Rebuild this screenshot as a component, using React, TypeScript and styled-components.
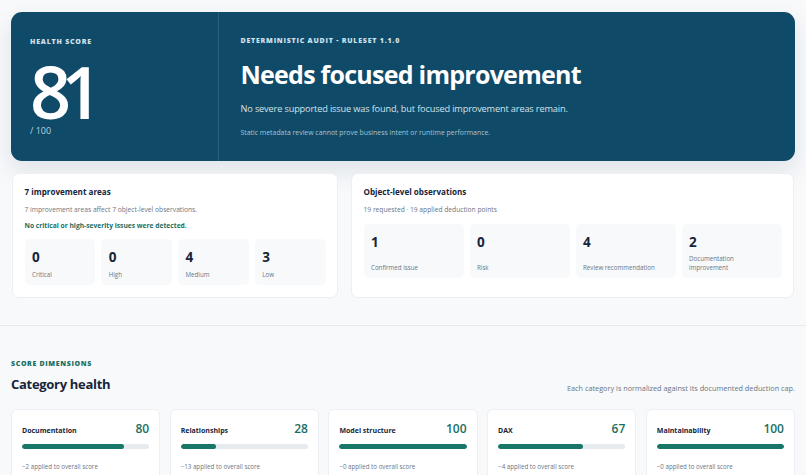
import React from 'react';
import styled, { createGlobalStyle } from 'styled-components';

const severity = [
  { value: 0, label: 'Critical' },
  { value: 0, label: 'High' },
  { value: 4, label: 'Medium' },
  { value: 3, label: 'Low' },
];

const observations = [
  { value: 1, label: 'Confirmed issue' },
  { value: 0, label: 'Risk' },
  { value: 4, label: 'Review recommendation' },
  { value: 2, label: 'Documentation improvement' },
];

const categories = [
  { name: 'Documentation', score: 80, applied: 2 },
  { name: 'Relationships', score: 28, applied: 13 },
  { name: 'Model structure', score: 100, applied: 0 },
  { name: 'DAX', score: 67, applied: 4 },
  { name: 'Maintainability', score: 100, applied: 0 },
];

const App = () => (
  <>
    <GlobalStyle />
    <Page>
      <Hero>
        <ScoreColumn>
          <Eyebrow>HEALTH SCORE</Eyebrow>
          <BigScore>81</BigScore>
          <ScoreMax>/ 100</ScoreMax>
        </ScoreColumn>
        <VerdictColumn>
          <Eyebrow>DETERMINISTIC AUDIT - RULESET 1.1.0</Eyebrow>
          <Verdict>Needs focused improvement</Verdict>
          <VerdictText>No severe supported issue was found, but focused improvement areas remain.</VerdictText>
          <VerdictNote>Static metadata review cannot prove business intent or runtime performance.</VerdictNote>
        </VerdictColumn>
      </Hero>

      <SummaryGrid>
        <SummaryCard>
          <CardTitle>7 improvement areas</CardTitle>
          <CardText>7 improvement areas affect 7 object-level observations.</CardText>
          <GoodText>No critical or high-severity issues were detected.</GoodText>
          <StatRow>
            {severity.map((item) => (
              <StatBox key={item.label}>
                <StatValue>{item.value}</StatValue>
                <StatLabel>{item.label}</StatLabel>
              </StatBox>
            ))}
          </StatRow>
        </SummaryCard>
        <SummaryCard>
          <CardTitle>Object-level observations</CardTitle>
          <CardText>19 requested · 19 applied deduction points</CardText>
          <StatRow $tall>
            {observations.map((item) => (
              <StatBox key={item.label} $tall>
                <StatValue>{item.value}</StatValue>
                <StatLabel>{item.label}</StatLabel>
              </StatBox>
            ))}
          </StatRow>
        </SummaryCard>
      </SummaryGrid>

      <Rule />

      <Section>
        <SectionEyebrow>SCORE DIMENSIONS</SectionEyebrow>
        <SectionHeader>
          <SectionTitle>Category health</SectionTitle>
          <SectionNote>Each category is normalized against its documented deduction cap.</SectionNote>
        </SectionHeader>
        <CategoryGrid>
          {categories.map((cat) => (
            <CategoryCard key={cat.name}>
              <CategoryTop>
                <CategoryName>{cat.name}</CategoryName>
                <CategoryScore>{cat.score}</CategoryScore>
              </CategoryTop>
              <Track>
                <Fill style={{ width: `${cat.score}%` }} />
              </Track>
              <Applied>−{cat.applied} applied to overall score</Applied>
            </CategoryCard>
          ))}
        </CategoryGrid>
      </Section>
    </Page>
  </>
);

export default App;

const GlobalStyle = createGlobalStyle`
  html, body {
    margin: 0;
    height: 100%;
    overflow: hidden;
    background: #f7f9fb;
  }

  * {
    box-sizing: border-box;
  }
`;

const Page = styled.div`
  height: 475px;
  overflow: hidden;
  padding-top: 12px;
  font-family: 'Open Sans', 'Noto Sans', sans-serif;
  color: #17243a;
  background: #f7f9fb;
`;

const Hero = styled.section`
  display: grid;
  grid-template-columns: 208px 1fr;
  height: 149px;
  margin: 0 11px;
  border-radius: 11px;
  background: #0f4a68;
  box-shadow: 0 10px 24px rgba(23, 36, 58, 0.1);
`;

const ScoreColumn = styled.div`
  padding: 25px 19px 0;
  border-right: 1px solid #2a5f7b;
`;

const Eyebrow = styled.div`
  font-size: 7px;
  font-weight: 800;
  line-height: 9px;
  letter-spacing: 0.78px;
  color: #cfe0ea;
`;

const BigScore = styled.div`
  margin-top: 15px;
  font-size: 72px;
  font-weight: 600;
  line-height: 61px;
  letter-spacing: -10px;
  color: #ffffff;
`;

const ScoreMax = styled.div`
  margin-top: 3px;
  font-size: 9px;
  line-height: 12px;
  color: #bcd2df;
`;

const VerdictColumn = styled.div`
  padding: 24px 21.5px 0;
`;

const Verdict = styled.h1`
  margin: 10px 0 0;
  font-size: 25px;
  font-weight: 700;
  line-height: 38px;
  letter-spacing: -0.75px;
  color: #ffffff;
`;

const VerdictText = styled.p`
  margin: 9px 0 0;
  font-size: 9.2px;
  line-height: 14px;
  letter-spacing: -0.15px;
  color: #d4e2ea;
`;

const VerdictNote = styled.p`
  margin: 11px 0 0;
  font-size: 6.9px;
  line-height: 12px;
  color: #a9c4d3;
`;

const SummaryGrid = styled.section`
  display: grid;
  grid-template-columns: 326px 443px;
  gap: 13px;
  margin: 12px 12px 0;
`;

const SummaryCard = styled.article`
  height: 125px;
  padding: 12px 11.5px;
  border: 1px solid #eceff3;
  border-radius: 7px;
  background: #ffffff;
`;

const CardTitle = styled.h2`
  margin: 0;
  font-size: 8.1px;
  font-weight: 700;
  line-height: 12px;
  color: #17243a;
`;

const CardText = styled.p`
  margin: 6px 0 0;
  font-size: 6.7px;
  line-height: 12px;
  color: #6a7585;
`;

const GoodText = styled.p`
  margin: 4px 0 0;
  font-size: 6.7px;
  font-weight: 700;
  line-height: 12px;
  color: #1a6f63;
`;

const StatRow = styled.div<{ $tall?: boolean }>`
  display: grid;
  grid-template-columns: repeat(4, 1fr);
  gap: 6px;
  margin-top: ${(props) => (props.$tall ? '8px' : '7px')};
`;

const StatBox = styled.div<{ $tall?: boolean }>`
  display: flex;
  flex-direction: column;
  justify-content: space-between;
  height: ${(props) => (props.$tall ? '54px' : '46px')};
  padding: 10px 7.5px 6.5px;
  border-radius: 5px;
  background: #f7f9fb;
`;

const StatValue = styled.div`
  font-size: 13.5px;
  font-weight: 700;
  line-height: 16px;
  color: #17243a;
`;

const StatLabel = styled.div`
  font-size: 6.2px;
  line-height: 9px;
  color: #6a7585;
`;

const Rule = styled.hr`
  height: 1px;
  margin: 27px 0 0;
  border: 0;
  background: #e6e9ed;
`;

const Section = styled.section`
  padding: 32.5px 11px 0;
`;

const SectionEyebrow = styled(Eyebrow)`
  letter-spacing: 0.65px;
  color: #1a6f63;
`;

const SectionHeader = styled.div`
  display: flex;
  align-items: flex-end;
  justify-content: space-between;
  margin-top: 6.5px;
`;

const SectionTitle = styled.h2`
  margin: 0;
  font-size: 13px;
  font-weight: 700;
  line-height: 20px;
  letter-spacing: -0.3px;
  color: #17243a;
`;

const SectionNote = styled.p`
  margin: 0 0 0.5px;
  font-size: 7.3px;
  line-height: 12px;
  color: #6a7585;
`;

const CategoryGrid = styled.div`
  display: grid;
  grid-template-columns: repeat(5, 1fr);
  gap: 9.5px;
  margin-top: 14.5px;
`;

const CategoryCard = styled.article`
  height: 90px;
  padding: 11px 10px;
  border: 1px solid #eceff3;
  border-radius: 6px;
  background: #ffffff;
`;

const CategoryTop = styled.div`
  display: flex;
  align-items: center;
  justify-content: space-between;
  height: 16px;
`;

const CategoryName = styled.div`
  margin-top: 3px;
  font-size: 7px;
  font-weight: 700;
  color: #17243a;
`;

const CategoryScore = styled.div`
  font-size: 12px;
  font-weight: 600;
  color: #1a6f63;
`;

const Track = styled.div`
  height: 5px;
  margin-top: 7.5px;
  border-radius: 3px;
  background: #e6ebef;
  overflow: hidden;
`;

const Fill = styled.div`
  height: 100%;
  border-radius: 3px;
  background: #19776a;
`;

const Applied = styled.div`
  margin-top: 12.5px;
  font-size: 6.2px;
  line-height: 9px;
  color: #6a7585;
`;
